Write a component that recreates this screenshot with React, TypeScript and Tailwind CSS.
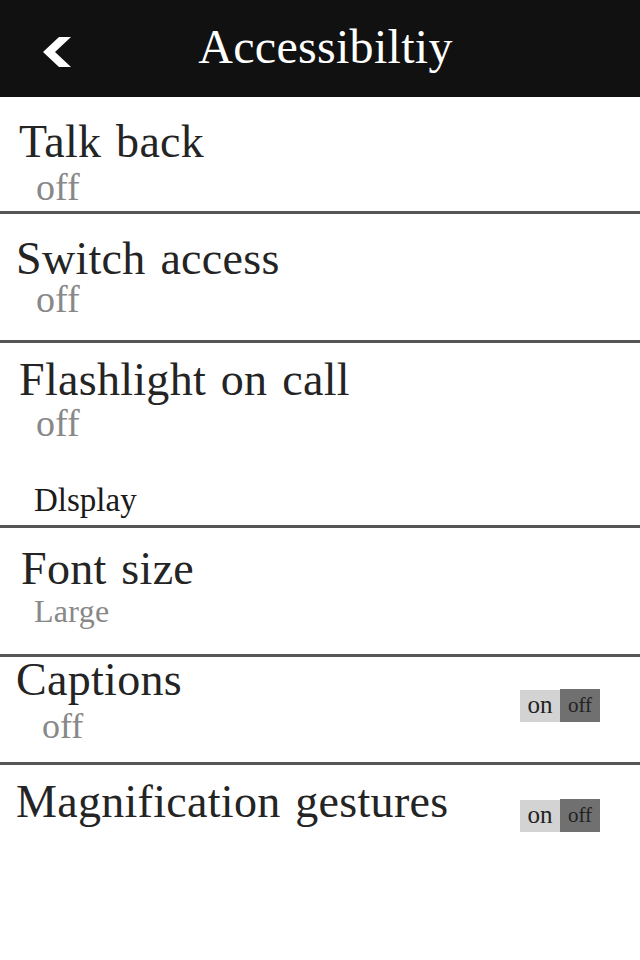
import React from "react";

const serif = { fontFamily: '"Liberation Serif", "Times New Roman", serif' };

const Toggle: React.FC<{ top: string }> = ({ top }) => (
    <div className={`flex ${top} mr-[40px] shrink-0`}>
        <span className="w-[40px] h-[32px] bg-[#d3d3d3] text-[#222] text-[25px] leading-[30px] flex justify-center">on</span>
        <span className="w-[40px] h-[33px] -mt-px bg-[#707070] text-[#222] text-[21px] leading-[33px] flex justify-center">off</span>
    </div>
);

const Divider = () => <div className="h-[3px] bg-[#555]" />;

const title = "text-[46px] text-[#242424] tracking-[0.3px] [word-spacing:3px]";

export default function App() {
    return (
        <div className="w-[640px] h-[960px] bg-white overflow-hidden" style={serif}>
            {/* Header */}
            <header className="h-[97px] bg-[#111] flex items-start">
                <svg className="mt-[37px] ml-[43px] shrink-0" width="28" height="30" viewBox="43 37 28 30">
                    <polygon points="59,37 71,37 55,52 71,67 59,67 43,52" fill="#fff" />
                </svg>
                <h1 className="flex-1 text-center pr-[60px] pt-[23px] text-white text-[48px] leading-[48px] tracking-[0.3px]">
                    Accessibiltiy
                </h1>
            </header>

            {/* Talk back */}
            <div className="pt-[22px] pb-[5px] pl-[19px]">
                <div className={`${title} leading-[46px]`}>Talk back</div>
                <div className="mt-[3px] pl-[17px] text-[38px] leading-[38px] text-[#888]">off</div>
            </div>
            <Divider />

            {/* Switch access */}
            <div className="pt-[25px] pb-[26px] pl-[16px]">
                <div className={`${title} leading-[40px]`}>Switch access</div>
                <div className="mt-[5px] pl-[20px] text-[38px] leading-[30px] text-[#888]">off</div>
            </div>
            <Divider />

            {/* Flashlight on call */}
            <div className="pt-[14px] pb-[8px] pl-[19px]">
                <div className={`${title} leading-[46px]`}>Flashlight on call</div>
                <div className="mt-[1px] pl-[17px] text-[38px] leading-[38px] text-[#888]">off</div>
                <div className="mt-[42px] pl-[15px] text-[33px] leading-[33px] text-[#1a1a1a]">Dlsplay</div>
            </div>
            <Divider />

            {/* Font size */}
            <div className="pt-[18px] pb-[27px] pl-[21px]">
                <div className={`${title} leading-[46px]`}>Font size</div>
                <div className="mt-[3px] pl-[13px] text-[32px] leading-[32px] text-[#888] tracking-[0.3px]">Large</div>
            </div>
            <Divider />

            {/* Captions */}
            <div className="flex items-start justify-between">
                <div className="pt-0 pb-[18px] pl-[16px]">
                    <div className={`${title} leading-[46px]`}>Captions</div>
                    <div className="mt-[5px] pl-[26px] text-[36px] leading-[36px] text-[#888]">off</div>
                </div>
                <Toggle top="mt-[33px]" />
            </div>
            <Divider />

            {/* Magnification gestures */}
            <div className="flex items-start justify-between">
                <div className="pt-[14px] pl-[16px]">
                    <div className={`${title} leading-[46px]`}>Magnification gestures</div>
                </div>
                <Toggle top="mt-[35px]" />
            </div>
        </div>
    );
}
